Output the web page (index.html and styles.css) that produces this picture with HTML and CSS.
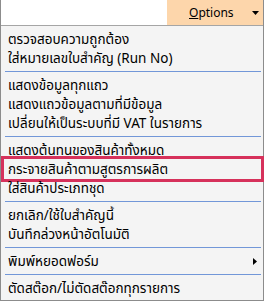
FILE: index.html
```html
<!DOCTYPE html>
<html lang="th">
<head>
<meta charset="UTF-8" />
<meta name="viewport" content="width=device-width, initial-scale=1" />
<title>Options</title>
<link rel="stylesheet" href="styles.css">
</head>
<body>

<div class="menu">
  <div class="topbar">
    <div class="options-btn">
      <span class="label"><u>O</u>ptions</span>
      <svg class="caret" width="7" height="4" viewBox="0 0 7 4"><path d="M0 0h7L3.5 4z" fill="#000"/></svg>
    </div>
  </div>

  <ul class="items">
    <li class="item">ตรวจสอบความถูกต้อง</li>
    <li class="item">ใส่หมายเลขใบสำคัญ (Run No)</li>
    <li class="sep"></li>
    <li class="item">แสดงข้อมูลทุกแถว</li>
    <li class="item">แสดงแถวข้อมูลตามที่มีข้อมูล</li>
    <li class="item">เปลี่ยนให้เป็นระบบที่มี VAT ในรายการ</li>
    <li class="sep"></li>
    <li class="item">แสดงต้นทุนของสินค้าทั้งหมด</li>
    <li class="item marked">กระจายสินค้าตามสูตรการผลิต</li>
    <li class="item">ใส่สินค้าประเภทชุด</li>
    <li class="sep"></li>
    <li class="item">ยกเลิก/ใช้ใบสำคัญนี้</li>
    <li class="item">บันทึกล่วงหน้าอัตโนมัติ</li>
    <li class="sep"></li>
    <li class="item has-sub">พิมพ์หยอดฟอร์ม
      <svg class="sub-arrow" width="4" height="7" viewBox="0 0 4 7"><path d="M0 0v7l4-3.5z" fill="#000"/></svg>
    </li>
    <li class="sep"></li>
    <li class="item">ตัดสต๊อก/ไม่ตัดสต๊อกทุกรายการ</li>
  </ul>
</div>

</body>
</html>
```

FILE: styles.css
```css
/* dropdown menu */
body {
  margin: 0;
  background: #fff;
  font-family: Tahoma, "Noto Sans Thai", "Noto Sans", "DejaVu Sans", sans-serif;
  font-size: 12px;
  color: #000;
}
.menu {
  width: 264px;
  height: 301px;
  box-sizing: border-box;
  border: 1px solid #8c8c8c;
  border-top: none;
  background: #f4f4f4;
}
.topbar {
  height: 25px;
  background: #fff;
  border-bottom: 1px solid #a5a5a5;
  display: flex;
  justify-content: flex-end;
}
.options-btn {
  width: 96px;
  background: #fdd6ab;
  display: flex;
  align-items: center;
  padding-left: 22px;
  box-sizing: border-box;
}
.options-btn .label {
  flex: 1;
}
.options-btn .caret {
  margin-right: 4px;
}
.items {
  list-style: none;
  margin: 0;
  padding: 4px 0 0;
}
.item {
  position: relative;
  height: 19px;
  line-height: 20px;
  padding-left: 7px;
  font-size: 13.5px;
  white-space: nowrap;
}
.sep {
  height: 1px;
  margin: 3px 2px 4px 4px;
  background: #7297d8;
}
.item.marked::after {
  content: "";
  position: absolute;
  top: -4px;
  bottom: -3px;
  left: 0;
  right: -1px;
  border: 3px solid #d6315b;
}
.has-sub .sub-arrow {
  position: absolute;
  right: 6px;
  top: 6px;
}
```
